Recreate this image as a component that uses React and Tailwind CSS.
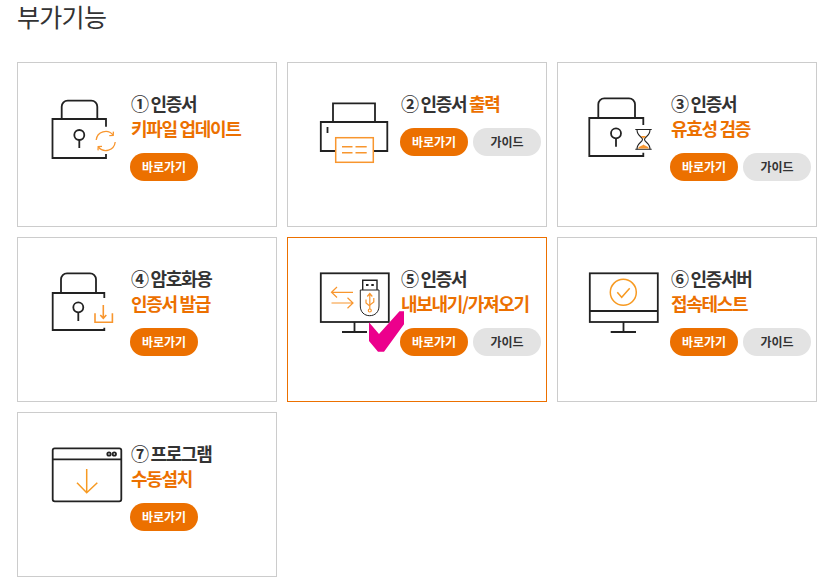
import React from "react";

const K = "#222222";
const O = "#f8962e";
const W = 1.8;

const Lock = ({ x1, x2, y1, y2, sx1, sx2, st, kx, ky, kb, g1, g2 }) => (
  <g fill="none" stroke={K} strokeWidth={W}>
    <path d={`M${x2} ${g1}V${y1}H${x1}V${y2}H${x2}V${g2}`} />
    <path d={`M${sx1} ${y1}V${st + 6}a6 6 0 0 1 6 -6H${sx2 - 6}a6 6 0 0 1 6 6V${y1}`} />
    <circle cx={kx} cy={ky} r="5" />
    <path d={`M${kx} ${ky + 5}V${kb}`} />
  </g>
);

const Icon1 = () => (
  <>
    <Lock x1={35.5} x2={89} y1={57} y2={96} sx1={44.7} sx2={80.3} st={38.7} kx={62.3} ky={73} kb={86} g1={64.7} g2={92} />
    <g fill="none" stroke={O} strokeWidth="1.3">
      <path d="M79.2 78A9.5 9.5 0 0 1 96 73" />
      <path d="M98.2 80A9.5 9.5 0 0 1 81.4 85" />
      <path d="M92.3 73.6L96.2 73.4L96.4 69.6" />
      <path d="M85 84.4L81.2 84.6L81 88.4" />
    </g>
  </>
);

const Icon2 = () => (
  <>
    <g fill="none" stroke={K} strokeWidth={W}>
      <path d="M46 60V41.3H88V60" />
      <path d="M48 89H33.8V60H100.3V89H87" />
      <path d="M40.5 65V71" />
    </g>
    <g fill="none" stroke={O} strokeWidth="1.5">
      <rect x="48.7" y="75.7" width="37.6" height="24.6" />
      <path d="M55 84.7H65.5M68.5 84.7H79.7M55 90.7H65.5M68.5 90.7H79.7" />
    </g>
  </>
);

const Icon3 = () => (
  <>
    <Lock x1={32.3} x2={86.3} y1={56} y2={94} sx1={41.3} sx2={78} st={36.3} kx={59} ky={71.3} kb={84.7} g1={63} g2={90.7} />
    <g fill="none" stroke={K} strokeWidth="1.1">
      <path d="M78.3 67.5H94.7M78.3 87.3H94.7" />
      <path d="M80 67.5c0 7 5.5 7 5.5 10s-5.5 3 -5.5 9.8M93 67.5c0 7 -5.5 7 -5.5 10s5.5 3 5.5 9.8" />
    </g>
    <path d="M83.5 74H89.5L86.5 76.5Z" fill={O} />
    <path d="M81 86.5C82 84 85 84 86.5 82.5C88 84 91 84 92 86.5Z" fill={O} />
  </>
);

const Icon4 = () => (
  <>
    <Lock x1={35.7} x2={87.3} y1={56} y2={93} sx1={44} sx2={79} st={36.3} kx={61.3} ky={70.3} kb={84} g1={61} g2={90.7} />
    <g fill="none" stroke={O} strokeWidth="1.6">
      <path d="M78 76.3V85.3H95.4V76.3" />
      <path d="M86.3 68V81M83.3 78L86.3 81.3L89.3 78" />
    </g>
  </>
);

const Icon5 = () => (
  <>
    <g fill="none" stroke={K} strokeWidth={W}>
      <rect x="33.8" y="36.3" width="68" height="48.7" />
      <path d="M67.5 85V95M55 95H80" />
    </g>
    <g fill="none" stroke={O} strokeWidth="1.2">
      <path d="M44.5 55.3H66M50 50L44.5 55.3L50 60.5" />
      <path d="M44.5 66H66M60.5 60.8L66 66L60.5 71.2" />
      <path d="M82.8 57V72M80.3 59.5L82.8 56.5L85.3 59.5" />
      <path d="M79 62.5V66L82.8 69M86.8 61V65L82.8 68" />
      <circle cx="82.8" cy="73.5" r="1.5" />
    </g>
    <path d="M73.3 53H92V69c0 6 -4 9.7 -9.3 9.7S73.3 75 73.3 69Z" fill="none" stroke={K} strokeWidth="1" />
    <path d="M75.7 53V43.3H90V53" fill="none" stroke={K} strokeWidth="1.4" />
    <path d="M79 47H81.5V49H79ZM84.3 47H86.8V49H84.3Z" fill={K} />
  </>
);

const Icon6 = () => (
  <>
    <g fill="none" stroke={K} strokeWidth={W}>
      <rect x="32.8" y="36.3" width="68" height="48.7" />
      <path d="M32.8 74H100.8M66.5 85V95M53.7 95H79" />
    </g>
    <g fill="none" stroke="#f79a22" strokeWidth="1.5">
      <circle cx="66.3" cy="55.3" r="13" />
      <path d="M60.3 55.3L64.7 60.3L72.7 51.3" />
    </g>
  </>
);

const Icon7 = () => (
  <>
    <g fill="none" stroke={K} strokeWidth={W}>
      <rect x="35.7" y="36.3" width="68.6" height="53" rx="2" />
      <path d="M35.7 47.3H104.3" />
      <circle cx="92" cy="42" r="1.7" />
      <circle cx="97.3" cy="42" r="1.7" />
    </g>
    <path d="M69.7 57V80.7M60 70.7L69.7 80.7L80.3 70.7" fill="none" stroke="#f79a22" strokeWidth="1.5" />
  </>
);

const items = [
  { n: "①", a: "인증서", b: "키파일 업데이트", icon: <Icon1 /> },
  { n: "②", a: "인증서", inline: "출력", guide: true, icon: <Icon2 /> },
  { n: "③", a: "인증서", b: "유효성 검증", guide: true, icon: <Icon3 /> },
  { n: "④", a: "암호화용", b: "인증서 발급", icon: <Icon4 /> },
  { n: "⑤", a: "인증서", b: "내보내기/가져오기", guide: true, icon: <Icon5 />, active: true },
  { n: "⑥", a: "인증서버", b: "접속테스트", guide: true, icon: <Icon6 /> },
  { n: "⑦", a: "프로그램", b: "수동설치", icon: <Icon7 /> },
];

function Card({ item }) {
  return (
    <div className={`relative flex h-[165px] w-[260px] border ${item.active ? "border-[#ec7000]" : "border-[#cccccc]"}`}>
      <svg className="h-[163px] w-[113px] shrink-0" viewBox="1 1 113 163">
        {item.icon}
      </svg>
      <div className="flex flex-col pt-[28px]">
        <div className="whitespace-nowrap text-[18px] leading-[25px] font-bold tracking-[-1.3px] text-[#333333]">
          {item.n} {item.a}
          {item.inline && <span className="text-[#ec7000]"> {item.inline}</span>}
        </div>
        {item.b && (
          <div className="whitespace-nowrap text-[18px] leading-[25px] font-bold tracking-[-1.3px] text-[#ec7000]">
            {item.b}
          </div>
        )}
        <div className="-ml-px mt-[12px] flex gap-[5px]">
          <span className="flex h-[28px] w-[68px] items-center justify-center rounded-full bg-[#ec7000] text-[12px] font-bold text-white">
            바로가기
          </span>
          {item.guide && (
            <span className="flex h-[28px] w-[68px] items-center justify-center rounded-full bg-[#e3e3e3] text-[12px] font-bold text-[#333333]">
              가이드
            </span>
          )}
        </div>
      </div>
      {item.active && (
        <svg className="absolute left-[80px] top-[72px] h-[42px] w-[37px]" viewBox="0 0 37 42">
          <path d="M1 12.3L11 24L31.5 1.3H36V14.3L16 41.7H10L1 31Z" fill="#ec008c" />
        </svg>
      )}
    </div>
  );
}

export default function App() {
  return (
    <div className="h-[586px] w-[831px] overflow-hidden bg-white pl-[17px] font-['Noto_Sans_CJK_KR','Noto_Sans',sans-serif]">
      <h1 className="h-[62px] text-[25px] leading-[33px] font-normal tracking-[-0.7px] text-[#333333]">부가기능</h1>
      <div className="grid grid-cols-[260px_260px_260px] gap-[10px]">
        {items.map((it) => (
          <Card key={it.n} item={it} />
        ))}
      </div>
    </div>
  );
}
